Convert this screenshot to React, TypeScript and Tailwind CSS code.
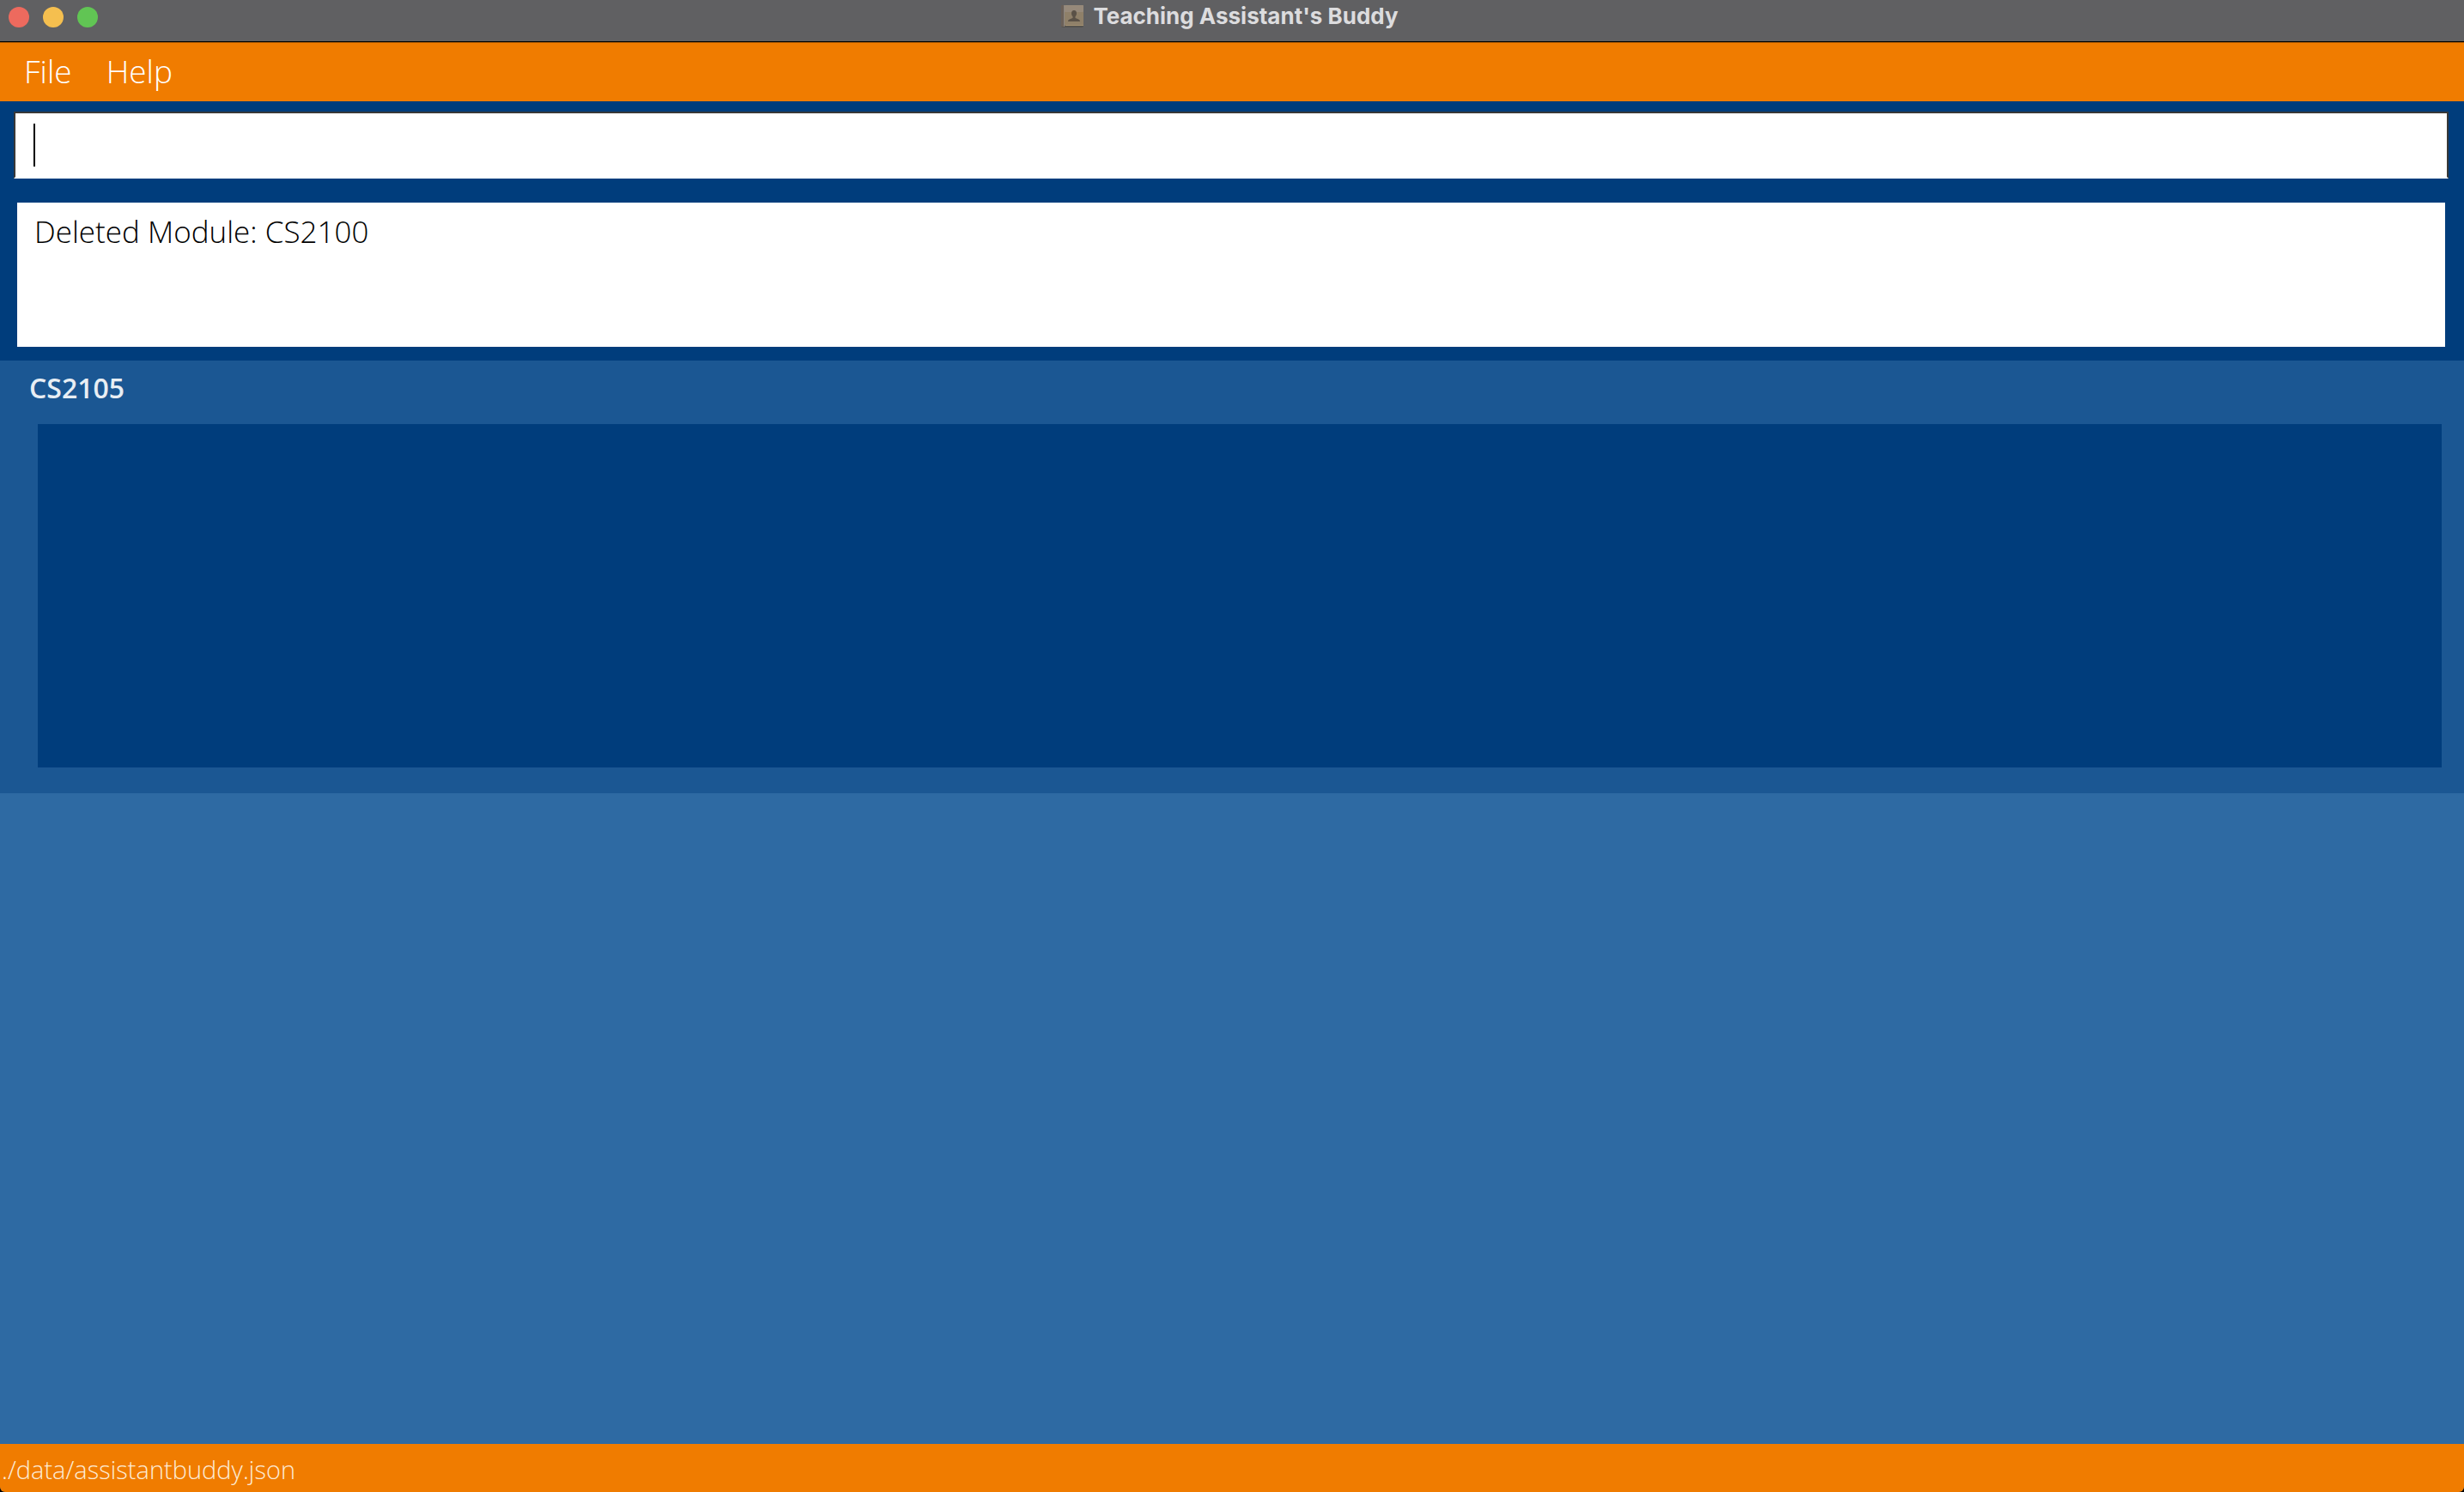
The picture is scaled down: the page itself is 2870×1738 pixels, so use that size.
import React from "react";

function ContactBookIcon() {
  return (
    <svg viewBox="0 0 28 28" className="mt-px h-7 w-7" aria-hidden="true">
      <rect x="1" y="2" width="26" height="25" rx="2" fill="#56534f" />
      <rect x="1" y="1" width="4" height="25" rx="1" fill="#6b6058" />
      <rect x="4" y="1" width="1" height="25" fill="#8d8781" />
      <rect x="5" y="1" width="22" height="24" rx="1" fill="#8f8069" />
      <rect x="5" y="1" width="22" height="8" rx="1" fill="#96897a" />
      <rect x="6" y="24" width="21" height="1" fill="#a39171" />
      <path
        d="M16 7c-2 0-3 1.500-3 3.500 0 1.700.700 3 1.500 3.800v1.700c-1.500.800-5.500 1.200-5.500 4h14c0-2.800-4-3.200-5.500-4v-1.700c.800-.800 1.500-2.100 1.500-3.800C19 8.500 18 7 16 7z"
        fill="#5a5147"
      />
    </svg>
  );
}

function TitleBar() {
  return (
    <header className="grid h-[50px] grid-cols-[1fr_auto_1fr] border-b border-[#a85800] bg-[#606062] shadow-[inset_0_-1px_0_#000]">
      <div className="flex gap-4 pt-2 pl-2.5">
        <button aria-label="Close" className="h-6 w-6 rounded-full bg-[#ed6a5e]" />
        <button aria-label="Minimize" className="h-6 w-6 rounded-full bg-[#f5bf4f]" />
        <button aria-label="Zoom" className="h-6 w-6 rounded-full bg-[#61c554]" />
      </div>
      <div className="flex items-start gap-2.5 pt-1 pr-1.5">
        <ContactBookIcon />
        <h1 className="font-['Inter',sans-serif] text-[26px] leading-[30px] font-bold text-[#dcdcde]">
          Teaching Assistant's Buddy
        </h1>
      </div>
    </header>
  );
}

function MenuBar() {
  return (
    <nav className="flex h-[68px] items-start gap-10 bg-[#f07c00] px-7 pt-2 text-[37px] leading-[50px] font-light text-white">
      <button>File</button>
      <button>Help</button>
    </nav>
  );
}

function CommandBox() {
  return (
    <div className="px-4 pt-3 pr-[18px]">
      <div className="relative">
        <input
          aria-label="Command"
          type="text"
          className="block h-[78px] w-full border-2 border-[#383838] border-b-white bg-white px-5 text-[35px] font-light text-black caret-transparent outline-none"
        />
        <span className="absolute top-3.5 left-[23px] h-[50px] w-0.5 bg-black" />
      </div>
    </div>
  );
}

function ResultDisplay() {
  return (
    <div className="px-5 pt-7 pr-[22px] pb-4">
      <textarea
        aria-label="Result"
        readOnly
        defaultValue="Deleted Module: CS2100"
        className="block h-[168px] w-full resize-none bg-white px-5 py-2.5 text-[35px] leading-[48px] font-light text-black outline-none"
      />
    </div>
  );
}

function ModuleCard({ code }: { code: string }) {
  return (
    <li className="bg-[#1b5793] pt-2.5 pr-[26px] pb-[30px] pl-11">
      <h2 className="-ml-2.5 h-16 text-[32px] leading-[44px] font-semibold text-[#e8eef4]">{code}</h2>
      <div className="h-[400px] bg-[#003d7c]" />
    </li>
  );
}

export default function App() {
  return (
    <div className="bg-black">
      <div className="flex min-h-screen flex-col overflow-hidden rounded-b-md bg-[#003d7c] font-['Open_Sans',sans-serif]">
        <TitleBar />
        <MenuBar />
        <CommandBox />
        <ResultDisplay />
        <main className="flex-1 bg-[#2e6aa3]">
          <ul>
            <ModuleCard code="CS2105" />
          </ul>
        </main>
        <footer className="h-14 bg-[#f07c00] px-0.5 pt-2.5 text-[29px] leading-[40px] font-light text-[#fdebd5]">
          ./data/assistantbuddy.json
        </footer>
      </div>
    </div>
  );
}
